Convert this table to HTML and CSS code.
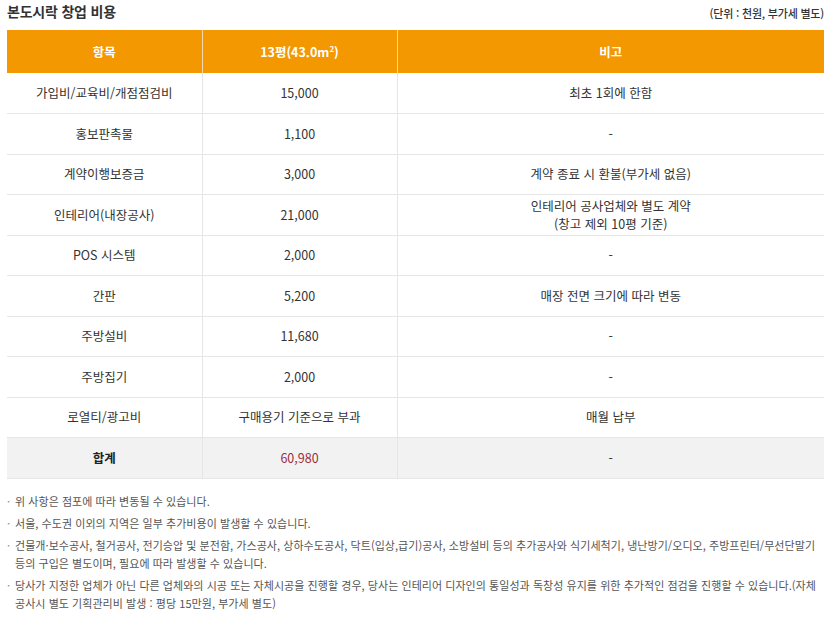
FILE: index.html
```html
<!DOCTYPE html>
<html lang="ko">
<head>
<meta charset="utf-8">
<link rel="stylesheet" href="styles.css">
</head>
<body>
<div class="wrap">
  <div class="top">
    <h2 class="title">본도시락 창업 비용</h2>
    <span class="unit">(단위 : 천원, 부가세 별도)</span>
  </div>
  <table class="cost">
    <colgroup><col class="c1"><col class="c2"><col class="c3"></colgroup>
    <thead>
      <tr><th>항목</th><th>13평(43.0m<sup>2</sup>)</th><th>비고</th></tr>
    </thead>
    <tbody>
      <tr><td>가입비/교육비/개점점검비</td><td>15,000</td><td>최초 1회에 한함</td></tr>
      <tr><td>홍보판촉물</td><td>1,100</td><td>-</td></tr>
      <tr><td>계약이행보증금</td><td>3,000</td><td>계약 종료 시 환불(부가세 없음)</td></tr>
      <tr><td>인테리어(내장공사)</td><td>21,000</td><td><span class="ln">인테리어 공사업체와 별도 계약</span><span class="ln">(창고 제외 10평 기준)</span></td></tr>
      <tr><td>POS 시스템</td><td>2,000</td><td>-</td></tr>
      <tr><td>간판</td><td>5,200</td><td>매장 전면 크기에 따라 변동</td></tr>
      <tr><td>주방설비</td><td>11,680</td><td>-</td></tr>
      <tr><td>주방집기</td><td>2,000</td><td>-</td></tr>
      <tr><td>로열티/광고비</td><td>구매용기 기준으로 부과</td><td>매월 납부</td></tr>
      <tr class="total"><td class="strong">합계</td><td class="sum">60,980</td><td>-</td></tr>
    </tbody>
  </table>
  <ul class="notes">
    <li>위 사항은 점포에 따라 변동될 수 있습니다.</li>
    <li>서울, 수도권 이외의 지역은 일부 추가비용이 발생할 수 있습니다.</li>
    <li>건물개·보수공사, 철거공사, 전기승압 및 분전함, 가스공사, 상하수도공사, 닥트(입상,급기)공사, 소방설비 등의 추가공사와 식기세척기, 냉난방기/오디오, 주방프린터/무선단말기 등의 구입은 별도이며, 필요에 따라 발생할 수 있습니다.</li>
    <li>당사가 지정한 업체가 아닌 다른 업체와의 시공 또는 자체시공을 진행할 경우, 당사는 인테리어 디자인의 통일성과 독창성 유지를 위한 추가적인 점검을 진행할 수 있습니다.(자체 공사시 별도 기획관리비 발생 : 평당 15만원, 부가세 별도)</li>
  </ul>
</div>
</body>
</html>
```
FILE: styles.css
```css
* { box-sizing: border-box; }
html, body { margin: 0; padding: 0; background: #fff; }
body {
  font-family: "Noto Sans CJK KR", "Noto Sans", sans-serif;
  color: #333;
}
.wrap { padding: 0 9px 0 7px; }
.top {
  display: flex;
  justify-content: space-between;
  align-items: center;
  height: 22px;
  margin-bottom: 8px;
}
.title {
  margin: 0;
  font-size: 14px;
  font-weight: 700;
  color: #333;
  letter-spacing: -0.2px;
}
.unit {
  font-size: 11px;
  font-weight: 500;
  color: #333;
  letter-spacing: -0.2px;
  padding-top: 3px;
}
.cost {
  width: 817px;
  border-collapse: collapse;
  table-layout: fixed;
  font-size: 12.5px;
}
.c1 { width: 195px; }
.c2 { width: 195px; }
.cost th {
  background: #f39800;
  color: #fff;
  font-weight: 700;
  height: 43px;
  font-size: 12.5px;
  border-left: 1px solid #f6d9a8;
  text-align: center;
  padding: 0;
}
.cost th:first-child { border-left: none; }
.cost th sup { font-size: 8px; vertical-align: 5px; line-height: 0; }
.cost td {
  height: 40.5px;
  text-align: center;
  padding: 0;
  border-bottom: 1px solid #e6e6e6;
  border-left: 1px solid #e6e6e6;
  line-height: 18px;
  color: #333;
}
.cost td .ln { display: block; line-height: 18px; }
.cost td:first-child { border-left: none; }
.cost tr.total td { background: #f2f2f2; }
.cost td.strong { font-weight: 700; color: #222; }
.cost td.sum { color: #9b2d3c; }
.notes {
  list-style: none;
  margin: 13px 0 0;
  padding: 0;
  font-size: 11px;
  line-height: 18px;
  color: #555;
  letter-spacing: 0.05px;
}
.notes li {
  position: relative;
  padding-left: 8px;
  margin-bottom: 4px;
}
.notes li::before {
  content: "·";
  position: absolute;
  left: 0;
  top: 0;
  color: #888;
}
```
